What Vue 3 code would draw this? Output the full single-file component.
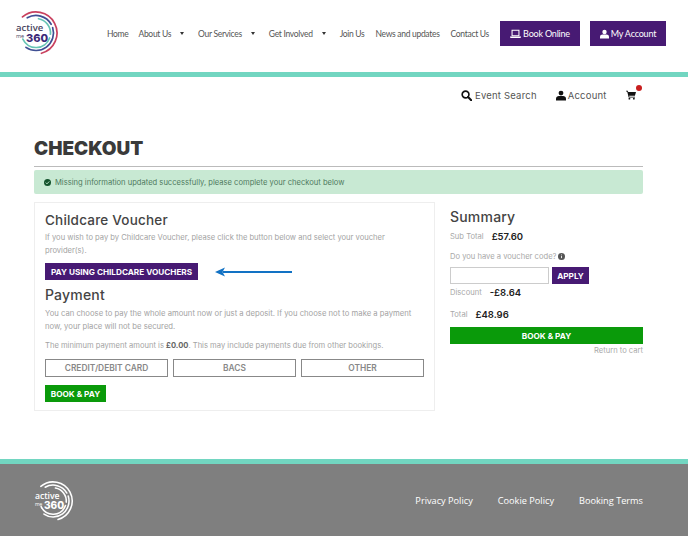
<template>
  <div class="page">
    <header class="top">
      <svg class="logo" viewBox="0 0 44 46" width="44" height="46">
        <path v-for="a in arcs" :key="a.d" :d="a.d" :stroke="a.color" stroke-width="1.7" fill="none" stroke-linecap="round" />
        <text fill="#4a4560"><tspan x="1" y="21" class="logo-a">active</tspan><tspan x="1" y="28" class="logo-m">me</tspan><tspan x="11" y="31.5" class="logo-n" fill="#3d2a78">360</tspan></text>
      </svg>
      <nav class="nav">
        <a class="nav-home">Home</a>
        <a class="nav-item drop">About Us<i class="caret"></i></a>
        <a class="nav-item drop">Our Services<i class="caret"></i></a>
        <a class="nav-item drop">Get Involved<i class="caret"></i></a>
        <a class="nav-item">Join Us</a>
        <a class="nav-item">News and updates</a>
        <a class="nav-item">Contact Us</a>
      </nav>
      <a class="head-btn book">
        <svg viewBox="0 0 16 14" width="11" height="10"><path d="M3 1.5h10v8H3z" fill="none" stroke="#fff" stroke-width="1.5"/><path d="M0 10.5h16v1.2l-1 1H1l-1-1z" fill="#fff"/></svg>
        Book Online
      </a>
      <a class="head-btn account">
        <svg viewBox="0 0 14 14" width="9" height="10"><circle cx="7" cy="3.8" r="3.4" fill="#fff"/><path d="M0 14v-2.5C0 9 2 7.8 4 7.8h6c2 0 4 1.2 4 3.7V14z" fill="#fff"/></svg>
        My Account
      </a>
    </header>
    <div class="teal"></div>

    <div class="subnav">
      <a class="sub-link">
        <svg viewBox="0 0 14 14" width="11" height="11"><circle cx="5.8" cy="5.8" r="4.3" fill="none" stroke="#111" stroke-width="2.1"/><path d="M9 9l4 4" stroke="#111" stroke-width="2.6" stroke-linecap="round"/></svg>
        Event Search
      </a>
      <a class="sub-link acc">
        <svg viewBox="0 0 14 14" width="10" height="11"><circle cx="7" cy="3.6" r="3.4" fill="#111"/><path d="M0 14v-2.5C0 9 2 7.8 4 7.8h6c2 0 4 1.2 4 3.7V14z" fill="#111"/></svg>
        Account
      </a>
      <span class="cart">
        <svg viewBox="0 0 14 13" width="10" height="10"><path d="M0 .5h2.6l.5 1.8H14l-1.5 5.4H4.4l.3 1.1h7.9v1.2H3.7L1.7 1.7H0z" fill="#111"/><circle cx="4.8" cy="11.6" r="1.3" fill="#111"/><circle cx="11" cy="11.6" r="1.3" fill="#111"/></svg>
        <b class="badge"></b>
      </span>
    </div>

    <main class="main">
      <h1>CHECKOUT</h1>
      <div class="alert">
        <svg viewBox="0 0 12 12" width="7" height="7"><circle cx="6" cy="6" r="6" fill="#14532d"/><path d="M3 6.2l2.1 2.1L9 4.2" fill="none" stroke="#c8e9d3" stroke-width="1.6"/></svg>
        Missing information updated successfully, please complete your checkout below
      </div>
      <div class="columns">
        <section class="card">
          <h2 class="voucher-title">Childcare Voucher</h2>
          <p class="two-line">If you wish to pay by Childcare Voucher, please click the button below and select your voucher provider(s).</p>
          <div class="voucher-row">
            <a class="btn purple">PAY USING CHILDCARE VOUCHERS</a>
            <svg class="arrow" viewBox="0 0 77 10" width="77" height="10"><path d="M8 5h69" stroke="#1272c4" stroke-width="2"/><path d="M0 5l10-4.5-2.5 4.5 2.5 4.5z" fill="#1272c4"/></svg>
          </div>
          <h2 class="pay-title">Payment</h2>
          <p class="two-line pay-text">You can choose to pay the whole amount now or just a deposit. If you choose not to make a payment now, your place will not be secured.</p>
          <p class="min">The minimum payment amount is <b>£0.00</b>. This may include payments due from other bookings.</p>
          <div class="methods">
            <a v-for="m in methods" :key="m">{{ m }}</a>
          </div>
          <a class="btn green small">BOOK &amp; PAY</a>
        </section>

        <aside class="summary">
          <h2>Summary</h2>
          <div class="line sub"><span>Sub Total</span><b>£57.60</b></div>
          <div class="question">Do you have a voucher code?
            <svg viewBox="0 0 12 12" width="7" height="7"><circle cx="6" cy="6" r="6" fill="#555"/><path d="M6 5.2v3.6M6 2.6v1.4" stroke="#fff" stroke-width="1.5"/></svg>
          </div>
          <div class="code-row">
            <input type="text" />
            <a class="btn purple apply">APPLY</a>
          </div>
          <div class="line disc"><span>Discount</span><b>-£8.64</b></div>
          <div class="line total"><span>Total</span><b>£48.96</b></div>
          <a class="btn green wide">BOOK &amp; PAY</a>
          <a class="back">Return to cart</a>
        </aside>
      </div>
    </main>

    <footer class="foot">
      <div class="teal foot-teal"></div>
      <div class="foot-body">
        <svg class="foot-logo" viewBox="0 0 44 46" width="40" height="42">
          <path v-for="a in arcs" :key="a.d" :d="a.d" stroke="#fff" stroke-width="1.7" fill="none" stroke-linecap="round" />
          <text fill="#fff"><tspan x="1" y="21" class="logo-a">active</tspan><tspan x="1" y="28" class="logo-m">me</tspan><tspan x="11" y="31.5" class="logo-n">360</tspan></text>
        </svg>
        <div class="foot-links">
          <a>Privacy Policy</a>
          <a>Cookie Policy</a>
          <a>Booking Terms</a>
        </div>
      </div>
    </footer>
  </div>
</template>

<script setup>
const methods = ['CREDIT/DEBIT CARD', 'BACS', 'OTHER']

// angle 0 = up, clockwise
function arc(r, from, to) {
  const pt = (deg) => {
    const t = (deg * Math.PI) / 180
    return `${(21 + r * Math.sin(t)).toFixed(2)} ${(23 - r * Math.cos(t)).toFixed(2)}`
  }
  const large = to - from > 180 ? 1 : 0
  return `M${pt(from)} A${r} ${r} 0 ${large} 1 ${pt(to)}`
}

const arcs = [
  { d: arc(21, -40, 165), color: '#c9415f' },
  { d: arc(17.5, -30, 60), color: '#3f4f93' },
  { d: arc(17.5, 72, 215), color: '#3f4f93' },
  { d: arc(14.5, 10, 95), color: '#66c4b4' },
  { d: arc(14.5, 110, 245), color: '#66c4b4' }
]
</script>

<style>
body { background: #fff; }
</style>

<style scoped>
.page {
  width: 688px;
  height: 536px;
  overflow: hidden;
  display: flex;
  flex-direction: column;
  font-family: Inter, "Liberation Sans", sans-serif;
  color: #999;
}
.top {
  height: 72px;
  display: flex;
  align-items: center;
  padding: 0 22px 5px 15px;
  box-sizing: border-box;
}
.logo { margin-top: -2px; flex: none; }
.nav {
  flex: 1;
  display: flex;
  align-items: center;
  margin-left: 48px;
  font-family: Lato, sans-serif;
  font-size: 8.5px;
  letter-spacing: -0.3px;
  color: #555;
  white-space: nowrap;
}
.nav-home { margin-right: 10px; }
.nav-item { margin-right: 11px; }
.nav-item.drop { display: flex; align-items: center; margin-right: 14px; }
.caret {
  margin-left: 9px;
  width: 0;
  height: 0;
  border: 2.5px solid transparent;
  border-top: 3px solid #333;
  border-bottom: 0;
}
.head-btn {
  height: 25px;
  background: #471a73;
  color: #fff;
  font-family: Lato, sans-serif;
  font-size: 9px;
  letter-spacing: -0.2px;
  display: flex;
  align-items: center;
  justify-content: center;
  gap: 2px;
  flex: none;
}
.book { width: 80px; margin-right: 10px; }
.account { width: 76px; }
.teal { height: 5px; background: #72d6c1; flex: none; }
.subnav {
  height: 36px;
  display: flex;
  align-items: center;
  padding: 0 0 0 461px;
  font-size: 9.5px;
  color: #555;
  letter-spacing: 0.2px;
}
.sub-link { display: flex; align-items: center; gap: 3px; white-space: nowrap; }
.acc { margin-left: 19px; gap: 2px; }
.cart { position: relative; margin-left: 19px; display: flex; }
.badge {
  position: absolute;
  top: -5px;
  left: 10px;
  width: 6px;
  height: 6px;
  border-radius: 50%;
  background: #c81e1e;
}
.main { flex: 1; padding: 0 45px 0 34px; }
h1 {
  margin: 26px 0 0;
  height: 27px;
  font-size: 19px;
  line-height: 20px;
  font-weight: 900;
  color: #3a3a3a;
  border-bottom: 1px solid #bbb;
}
.alert {
  margin-top: 3px;
  height: 24px;
  background: #c8e9d3;
  border-radius: 2px;
  display: flex;
  align-items: center;
  gap: 4px;
  padding-left: 10px;
  font-size: 7.6px;
  color: #4f7a5e;
  white-space: nowrap;
}
.columns { display: flex; margin-top: 8px; }
.card {
  width: 401px;
  height: 209px;
  box-sizing: border-box;
  border: 1px solid #eee;
  padding: 8px 10px 0;
  flex: none;
}
h2 {
  margin: 0;
  font-size: 14px;
  line-height: 18px;
  font-weight: 500;
  color: #444;
  letter-spacing: 0.2px;
}
.voucher-title { font-size: 13.5px; }
p {
  margin: 0;
  font-size: 7.6px;
  color: #a3a3a3;
}
.two-line { line-height: 12.5px; margin-top: 3px; }
.pay-text { font-size: 7.7px; margin-top: 4px; }
.voucher-row { display: flex; align-items: center; margin-top: 6px; }
.arrow { margin-left: 17px; }
.btn {
  display: flex;
  align-items: center;
  justify-content: center;
  color: #fff;
  font-size: 8.2px;
  font-weight: 700;
  white-space: nowrap;
  box-sizing: border-box;
}
.purple { background: #471a73; height: 17px; width: 153px; }
.green { background: #0a9a0a; height: 17px; }
.small { width: 61px; margin-top: 8px; }
.pay-title { margin-top: 6px; }
.min { margin-top: 7px; line-height: 12px; }
.min b { color: #666; }
.methods { display: flex; gap: 5px; margin-top: 7px; width: 379px; }
.methods a {
  flex: 1;
  height: 18px;
  border: 1px solid #888;
  box-sizing: border-box;
  display: flex;
  align-items: center;
  justify-content: center;
  font-size: 8.4px;
  font-weight: 600;
  color: #888;
}
.summary { flex: 1; margin-left: 15px; padding-top: 6px; }
.line {
  display: flex;
  align-items: center;
  gap: 8px;
  font-size: 7.6px;
  color: #a8a8a8;
}
.line b { font-size: 9.5px; font-weight: 600; color: #222; }
.sub { margin-top: 4px; height: 12px; }
.question {
  margin-top: 8px;
  height: 12px;
  display: flex;
  align-items: center;
  gap: 2px;
  font-size: 7.6px;
  color: #a8a8a8;
}
.code-row { display: flex; gap: 3px; margin-top: 5px; }
.code-row input {
  width: 99px;
  height: 17px;
  box-sizing: border-box;
  border: 1px solid #ccc;
  padding: 0;
  margin: 0;
  outline: none;
}
.apply { width: 37px; }
.disc { margin-top: 2px; height: 12px; }
.total { margin-top: 10px; height: 12px; }
.wide { width: 193px; margin-top: 7px; }
.back {
  display: block;
  text-align: right;
  margin-top: 2px;
  font-size: 7.6px;
  line-height: 10px;
  color: #aaa;
  width: 193px;
}
.foot { flex: none; height: 77px; display: flex; flex-direction: column; }
.foot-body {
  flex: 1;
  background: #7f7f7f;
  display: flex;
  align-items: center;
  justify-content: space-between;
  padding: 0 45px 0 34px;
}
.foot-logo { margin-top: 2px; }
.foot-links {
  display: flex;
  gap: 25px;
  font-family: "Open Sans", sans-serif;
  font-size: 9.2px;
  color: #fff;
}
.logo-a { font: 600 9.5px "Open Sans", sans-serif; }
.logo-m { font: 500 5.5px "Open Sans", sans-serif; }
.logo-n { font: 800 11px Inter, sans-serif; }
</style>
